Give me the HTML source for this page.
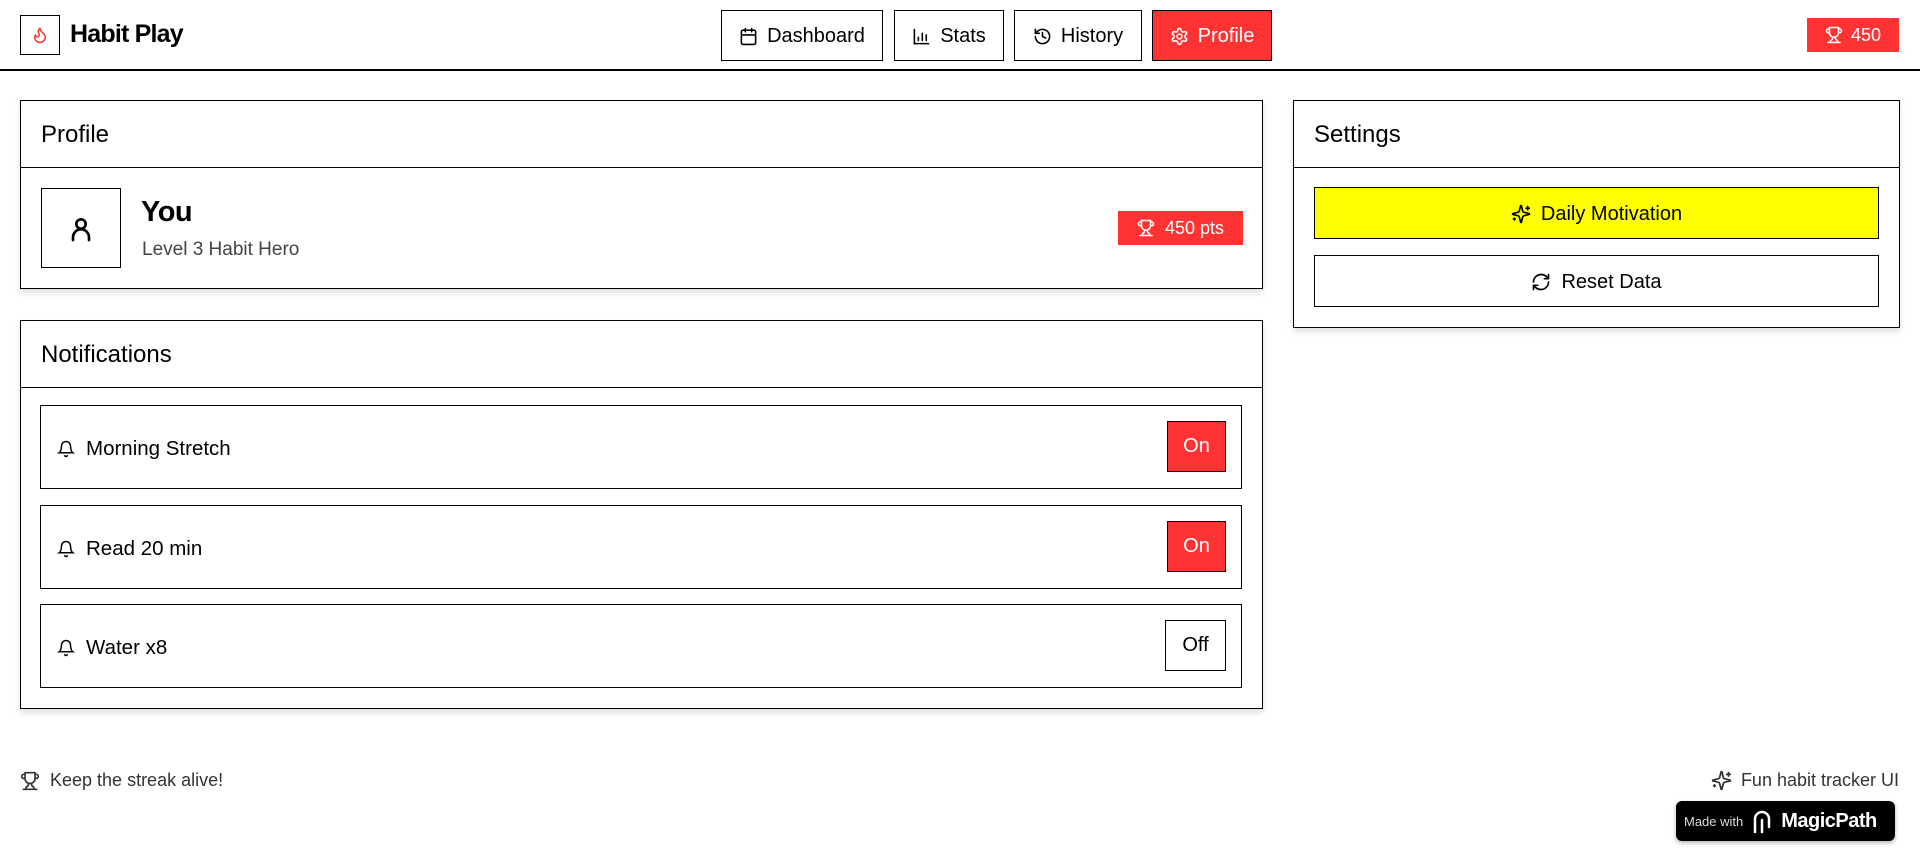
<!DOCTYPE html>
<html><head><meta charset="utf-8"><style>
*{box-sizing:border-box;margin:0;padding:0}
body{width:1920px;height:868px;background:#fff;font-family:"Liberation Sans",sans-serif;color:#000;position:relative;overflow:hidden}
.abs{position:absolute}
.hdr{left:0;top:0;width:1920px;height:71px;border-bottom:2px solid #000}
.logo{left:20px;top:15px;width:40px;height:40px;border:1.5px solid #000;display:flex;align-items:center;justify-content:center}
.brand{left:70px;top:20px;font-size:25px;font-weight:bold;letter-spacing:-0.8px}
.nav{top:10px;height:51px;border:1.5px solid #000;display:flex;align-items:center;justify-content:center;gap:9px;font-size:20px;padding-top:2px}
.red{background:#ff3333;color:#fff}
.card{border:1.5px solid #000;background:#fff;box-shadow:0 4px 6px rgba(0,0,0,0.12)}
.ch{position:absolute;left:0;right:0;top:0;height:67px;border-bottom:1.5px solid #000;padding-left:20px;font-size:24px;line-height:68px}
.item{left:40px;width:1202px;height:84px;border:1.5px solid #000;display:flex;align-items:center;padding-left:16px;padding-top:3px;font-size:20.5px;gap:11px}
.tog{position:absolute;right:15px;top:15px;width:59px;height:51px;border:1.5px solid #000;display:flex;align-items:center;justify-content:center;font-size:20px}
.btn{left:1314px;width:565px;height:52px;border:1.5px solid #000;display:flex;align-items:center;justify-content:center;gap:10px;font-size:20px;padding-top:2px}
svg{display:block}
</style></head><body>
<div class="abs hdr"></div>
<div class="abs logo"><svg width="18" height="20" viewBox="0 0 24 24" fill="none" stroke="#ff3333" stroke-width="2" stroke-linecap="round" stroke-linejoin="round"><path d="M8.5 14.5A2.5 2.5 0 0 0 11 12c0-1.4-.5-2-1-3-1.1-2.1-.2-4 2-6 .5 2.5 2 4.9 4 6.5 2 1.6 3 3.5 3 5.5a7 7 0 1 1-14 0c0-1.2.4-2.3 1-3.2.2 1.4 1.2 2.7 2.5 2.7z"/></svg></div>
<div class="abs brand">Habit Play</div>

<div class="abs nav" style="left:721px;width:162px"><svg width="19" height="19" viewBox="0 0 24 24" fill="none" stroke="#000" stroke-width="2" stroke-linecap="round"><rect x="3" y="4" width="18" height="18" rx="2"/><path d="M16 2v4M8 2v4M3 10h18"/></svg>Dashboard</div>
<div class="abs nav" style="left:894px;width:110px"><svg width="19" height="19" viewBox="0 0 24 24" fill="none" stroke="#000" stroke-width="2" stroke-linecap="round"><path d="M3 3v18h18M8 17v-4M13 17V8M18 17v-7"/></svg>Stats</div>
<div class="abs nav" style="left:1014px;width:128px"><svg width="19" height="19" viewBox="0 0 24 24" fill="none" stroke="#000" stroke-width="2" stroke-linecap="round" stroke-linejoin="round"><path d="M3 12a9 9 0 1 0 9-9 9.75 9.75 0 0 0-6.74 2.74L3 8"/><path d="M3 3v5h5M12 7v5l4 2"/></svg>History</div>
<div class="abs nav red" style="left:1152px;width:120px;border-color:#000"><svg width="19" height="19" viewBox="0 0 24 24" fill="none" stroke="#fff" stroke-width="2"><circle cx="12" cy="12" r="3"/><path d="M12.2 2h-.4a2 2 0 0 0-2 2v.2a2 2 0 0 1-1 1.7l-.4.3a2 2 0 0 1-2 0l-.2-.1a2 2 0 0 0-2.7.7l-.2.4a2 2 0 0 0 .7 2.7l.2.1a2 2 0 0 1 1 1.7v.5a2 2 0 0 1-1 1.7l-.2.1a2 2 0 0 0-.7 2.7l.2.4a2 2 0 0 0 2.7.7l.2-.1a2 2 0 0 1 2 0l.4.3a2 2 0 0 1 1 1.7v.2a2 2 0 0 0 2 2h.4a2 2 0 0 0 2-2v-.2a2 2 0 0 1 1-1.7l.4-.3a2 2 0 0 1 2 0l.2.1a2 2 0 0 0 2.7-.7l.2-.4a2 2 0 0 0-.7-2.7l-.2-.1a2 2 0 0 1-1-1.7v-.5a2 2 0 0 1 1-1.7l.2-.1a2 2 0 0 0 .7-2.7l-.2-.4a2 2 0 0 0-2.7-.7l-.2.1a2 2 0 0 1-2 0l-.4-.3a2 2 0 0 1-1-1.7V4a2 2 0 0 0-2-2z"/></svg>Profile</div>

<div class="abs red" style="left:1807px;top:18px;width:92px;height:34px;display:flex;align-items:center;justify-content:center;gap:8px;font-size:18px"><svg width="18" height="18" viewBox="0 0 24 24" fill="none" stroke="#fff" stroke-width="2" stroke-linecap="round"><path d="M6 9H4.5a2.5 2.5 0 0 1 0-5H6M18 9h1.5a2.5 2.5 0 0 0 0-5H18M4 22h16M10 14.7V17c0 .6-.5 1-1 1.2C7.9 18.8 7 20.2 7 22M14 14.7V17c0 .6.5 1 1 1.2 1.2.5 2 1.9 2 3.8M18 2H6v7a6 6 0 0 0 12 0V2z"/></svg>450</div>

<!-- Profile card -->
<div class="abs card" style="left:20px;top:100px;width:1243px;height:189px">
<div class="ch">Profile</div>
<div class="abs" style="left:20px;top:87px;width:80px;height:80px;border:1.5px solid #000;display:flex;align-items:center;justify-content:center"><svg width="32" height="32" viewBox="0 0 24 24" fill="none" stroke="#000" stroke-width="2" stroke-linecap="round"><circle cx="12" cy="9" r="3.5"/><path d="M6 21v-2a6 6 0 0 1 12 0v2"/></svg></div>
<div class="abs" style="left:120px;top:95px;font-size:29px;font-weight:bold;letter-spacing:-0.5px">You</div>
<div class="abs" style="left:121px;top:138px;font-size:19px;color:#444">Level 3 Habit Hero</div>
<div class="abs red" style="left:1097px;top:110px;width:125px;height:34px;display:flex;align-items:center;justify-content:center;gap:10px;font-size:18px"><svg width="18" height="18" viewBox="0 0 24 24" fill="none" stroke="#fff" stroke-width="2" stroke-linecap="round"><path d="M6 9H4.5a2.5 2.5 0 0 1 0-5H6M18 9h1.5a2.5 2.5 0 0 0 0-5H18M4 22h16M10 14.7V17c0 .6-.5 1-1 1.2C7.9 18.8 7 20.2 7 22M14 14.7V17c0 .6.5 1 1 1.2 1.2.5 2 1.9 2 3.8M18 2H6v7a6 6 0 0 0 12 0V2z"/></svg>450 pts</div>
</div>

<!-- Notifications card -->
<div class="abs card" style="left:20px;top:320px;width:1243px;height:389px">
<div class="ch">Notifications</div>
</div>
<div class="abs item" style="top:405px"><svg width="18" height="18" viewBox="0 0 24 24" fill="none" stroke="#000" stroke-width="2" stroke-linecap="round"><path d="M6 8a6 6 0 0 1 12 0c0 7 3 9 3 9H3s3-2 3-9M10.3 21a1.94 1.94 0 0 0 3.4 0"/></svg>Morning Stretch<div class="tog red">On</div></div>
<div class="abs item" style="top:505px"><svg width="18" height="18" viewBox="0 0 24 24" fill="none" stroke="#000" stroke-width="2" stroke-linecap="round"><path d="M6 8a6 6 0 0 1 12 0c0 7 3 9 3 9H3s3-2 3-9M10.3 21a1.94 1.94 0 0 0 3.4 0"/></svg>Read 20 min<div class="tog red">On</div></div>
<div class="abs item" style="top:604px"><svg width="18" height="18" viewBox="0 0 24 24" fill="none" stroke="#000" stroke-width="2" stroke-linecap="round"><path d="M6 8a6 6 0 0 1 12 0c0 7 3 9 3 9H3s3-2 3-9M10.3 21a1.94 1.94 0 0 0 3.4 0"/></svg>Water x8<div class="tog" style="right:15px;width:61px">Off</div></div>

<!-- Settings -->
<div class="abs card" style="left:1293px;top:100px;width:607px;height:228px">
<div class="ch">Settings</div>
</div>
<div class="abs btn" style="top:187px;background:#ffff00"><svg width="20" height="20" viewBox="0 0 24 24" fill="none" stroke="#000" stroke-width="2" stroke-linecap="round" stroke-linejoin="round"><path d="M9.9 15.5A2 2 0 0 0 8.5 14.1L2.4 12.5a.5.5 0 0 1 0-1l6.1-1.6a2 2 0 0 0 1.4-1.4l1.6-6.1a.5.5 0 0 1 1 0l1.6 6.1a2 2 0 0 0 1.4 1.4l6.1 1.6a.5.5 0 0 1 0 1l-6.1 1.6a2 2 0 0 0-1.4 1.4l-1.6 6.1a.5.5 0 0 1-1 0z"/><path d="M20 3v4M22 5h-4M4 17v2M5 18H3"/></svg>Daily Motivation</div>
<div class="abs btn" style="top:255px"><svg width="20" height="20" viewBox="0 0 24 24" fill="none" stroke="#000" stroke-width="2" stroke-linecap="round" stroke-linejoin="round"><path d="M3 12a9 9 0 0 1 9-9 9.75 9.75 0 0 1 6.74 2.74L21 8"/><path d="M21 3v5h-5M21 12a9 9 0 0 1-9 9 9.75 9.75 0 0 1-6.74-2.74L3 16"/><path d="M8 16H3v5"/></svg>Reset Data</div>

<!-- Footer -->
<div class="abs" style="left:20px;top:770px;display:flex;align-items:center;gap:10px;font-size:18px;color:#333"><svg width="20" height="20" viewBox="0 0 24 24" fill="none" stroke="#333" stroke-width="2" stroke-linecap="round"><path d="M6 9H4.5a2.5 2.5 0 0 1 0-5H6M18 9h1.5a2.5 2.5 0 0 0 0-5H18M4 22h16M10 14.7V17c0 .6-.5 1-1 1.2C7.9 18.8 7 20.2 7 22M14 14.7V17c0 .6.5 1 1 1.2 1.2.5 2 1.9 2 3.8M18 2H6v7a6 6 0 0 0 12 0V2z"/></svg>Keep the streak alive!</div>
<div class="abs" style="right:21px;top:770px;display:flex;align-items:center;gap:9px;font-size:18px;color:#333"><svg width="21" height="21" viewBox="0 0 24 24" fill="none" stroke="#333" stroke-width="2" stroke-linecap="round" stroke-linejoin="round"><path d="M9.9 15.5A2 2 0 0 0 8.5 14.1L2.4 12.5a.5.5 0 0 1 0-1l6.1-1.6a2 2 0 0 0 1.4-1.4l1.6-6.1a.5.5 0 0 1 1 0l1.6 6.1a2 2 0 0 0 1.4 1.4l6.1 1.6a.5.5 0 0 1 0 1l-6.1 1.6a2 2 0 0 0-1.4 1.4l-1.6 6.1a.5.5 0 0 1-1 0z"/><path d="M20 3v4M22 5h-4M4 17v2M5 18H3"/></svg>Fun habit tracker UI</div>
<div class="abs" style="left:1676px;top:801px;width:219px;height:40px;background:#000;border-radius:6px;display:flex;align-items:center;padding-left:8px;gap:8px;color:#fff;box-shadow:0 2px 4px rgba(0,0,0,.3)"><span style="font-size:13px;color:#ddd">Made with</span><svg width="22" height="26" viewBox="0 0 22 26" fill="none" stroke="#fff" stroke-width="2.5" stroke-linecap="round"><path d="M4 24V11a7 7 0 0 1 14 0v8M11 24v-12"/></svg><span style="font-size:20px;font-weight:bold;letter-spacing:-0.5px">MagicPath</span></div>
</body></html>
